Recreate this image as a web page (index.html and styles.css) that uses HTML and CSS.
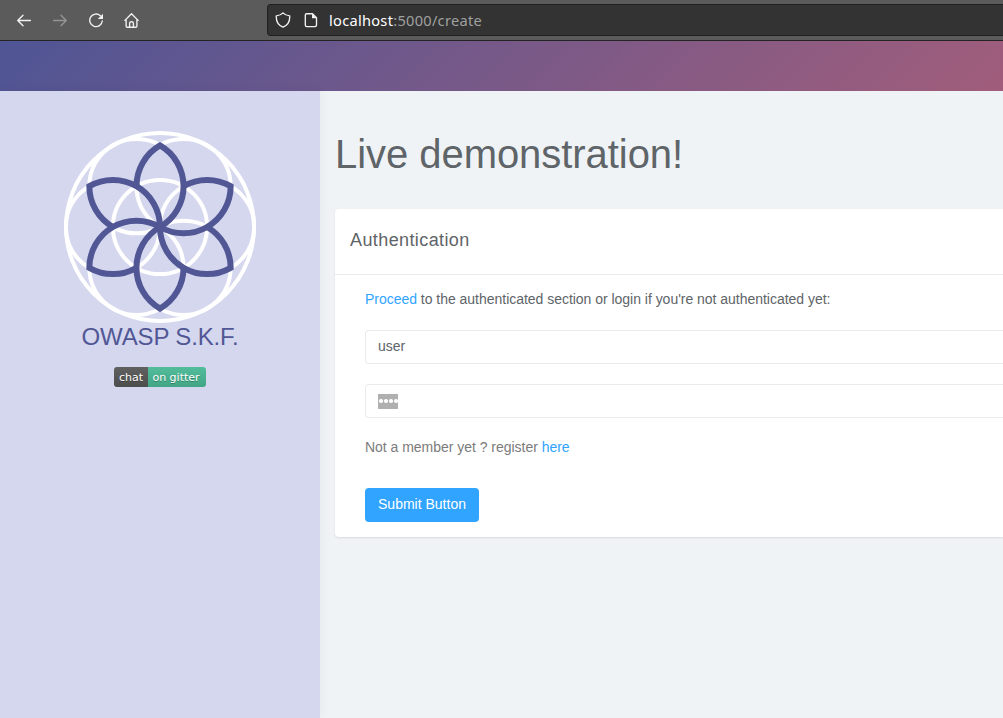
FILE: index.html
```html
<!DOCTYPE html>
<html lang="en">
<head>
<meta charset="utf-8">
<title>OWASP S.K.F.</title>
<link rel="stylesheet" href="styles.css">
</head>
<body>
<div class="toolbar">
  <svg class="nav-icon" viewBox="0 0 16 16"><path d="M14.400 8.500H2M7 3.200 1.700 8.500 7 13.800"/></svg>
  <svg class="nav-icon nav-icon-off" viewBox="0 0 16 16"><path d="M1.600 8.500H14M9 3.200l5.300 5.300L9 13.800"/></svg>
  <svg class="nav-icon" viewBox="0 0 16 16"><path d="M12.300 3.700A6.300 6.300 0 1 0 14.300 9"/><path class="solid" d="M15 1.800v5.200H9.800z"/></svg>
  <svg class="nav-icon" viewBox="0 0 16 16"><path d="M.9 8.400 7.500 1.700l6.600 6.700M2.100 7.400v6.600q0 1.200 1.200 1.200h8.400q1.200 0 1.200-1.200V7.400M5.600 15v-3.700q0-1.600 1.900-1.600t1.900 1.600V15"/></svg>
  <div class="urlbar">
    <svg class="url-icon" viewBox="0 0 16 16"><path d="M8 .9C6.400 2.600 3.800 3.700 1.300 3.900 1 8.500 3 13.200 8 15.200c5-2 7-6.700 6.700-11.300C12.200 3.700 9.600 2.600 8 .9z"/></svg>
    <svg class="url-icon" viewBox="0 0 16 16"><path d="M3.600 1.700h5.900l4 4v7.400q0 1.500-1.500 1.500H3.700q-1.400 0-1.400-1.500V3.100q0-1.400 1.300-1.400z"/><path class="solid" d="M9 1.500v4.800h4.800z"/></svg>
    <div class="url"><span class="url-host">localhost</span>:5000/create</div>
  </div>
</div>
<div class="banner"></div>
<div class="page">
  <aside class="sidebar">
    <svg class="logo" viewBox="-96 -96 192 192">
      <g class="rings">
        <circle r="94"/>
        <circle r="47.100"/>
        <circle cx="47.100" r="47.100"/>
        <circle cx="-47.100" r="47.100"/>
        <circle cx="23.550" cy="-40.800" r="47.100"/>
        <circle cx="-23.550" cy="-40.800" r="47.100"/>
        <circle cx="23.550" cy="40.800" r="47.100"/>
        <circle cx="-23.550" cy="40.800" r="47.100"/>
      </g>
      <g class="petals">
        <path d="M-23.550-40.800A47.100 47.100 0 0 1 0-81.600A47.100 47.100 0 0 1 0 0"/>
        <path transform="rotate(60)" d="M-23.550-40.800A47.100 47.100 0 0 1 0-81.600A47.100 47.100 0 0 1 0 0"/>
        <path transform="rotate(120)" d="M-23.550-40.800A47.100 47.100 0 0 1 0-81.600A47.100 47.100 0 0 1 0 0"/>
        <path transform="rotate(180)" d="M-23.550-40.800A47.100 47.100 0 0 1 0-81.600A47.100 47.100 0 0 1 0 0"/>
        <path transform="rotate(240)" d="M-23.550-40.800A47.100 47.100 0 0 1 0-81.600A47.100 47.100 0 0 1 0 0"/>
        <path transform="rotate(300)" d="M-23.550-40.800A47.100 47.100 0 0 1 0-81.600A47.100 47.100 0 0 1 0 0"/>
      </g>
    </svg>
    <div class="brand">OWASP S.K.F.</div>
    <div class="badge"><span class="badge-left">chat</span><span class="badge-right">on gitter</span></div>
  </aside>
  <main class="main">
    <h1 class="title">Live demonstration!</h1>
    <section class="card">
      <h2 class="card-head">Authentication</h2>
      <form class="card-body">
        <p class="intro"><a class="link">Proceed</a> to the authenticated section or login if you're not authenticated yet:</p>
        <div class="field">user</div>
        <div class="field"><span class="selected"><i class="dot"></i><i class="dot"></i><i class="dot"></i><i class="dot"></i></span></div>
        <p class="hint">Not a member yet ? register <a class="link">here</a></p>
        <button class="submit" type="button">Submit Button</button>
      </form>
    </section>
  </main>
</div>
</body>
</html>
```
FILE: styles.css
```css
* { box-sizing: border-box; }
body {
  margin: 0;
  height: 718px;
  overflow: hidden;
  display: flex;
  flex-direction: column;
  font: 14px/20px "Liberation Sans", Arial, sans-serif;
  color: #5e6468;
  background: #eff3f6;
}
.toolbar {
  flex: none;
  height: 41px;
  display: flex;
  align-items: center;
  gap: 20px;
  padding-left: 16px;
  background: #5b5b5b;
  border-bottom: 1px solid #242424;
}
.nav-icon, .url-icon {
  flex: none;
  width: 16px;
  height: 16px;
  fill: none;
  stroke: #f2f2f2;
  stroke-width: 1.35;
  stroke-linecap: round;
  stroke-linejoin: round;
}
.nav-icon-off { stroke: #949494; }
.solid { fill: #f2f2f2; stroke: none; }
.urlbar {
  flex: 1;
  height: 32px;
  margin-left: 107px;
  display: flex;
  align-items: center;
  gap: 12px;
  padding-left: 7px;
  background: #333;
  border: 1px solid #202020;
  border-right: 0;
  border-radius: 4px 0 0 4px;
}
.url {
  margin-left: -2px;
  padding-bottom: 1px;
  font: 14.600px/20px "Noto Sans", sans-serif;
  letter-spacing: .28px;
  color: #a0a0a0;
}
.url-host { color: #fff; }
.banner {
  flex: none;
  height: 50px;
  background: linear-gradient(135deg, #4f5595 0, #a15d7b 100%);
}
.page { flex: 1; display: flex; }
.sidebar {
  flex: none;
  width: 320px;
  display: flex;
  flex-direction: column;
  align-items: center;
  padding-top: 40px;
  background: #d5d7ee;
  box-shadow: 0 0 12px rgba(0, 0, 0, .05);
}
.logo { width: 192px; height: 192px; }
.rings { fill: none; stroke: #fff; stroke-width: 4; }
.petals { fill: none; stroke: #515795; stroke-width: 6; }
.brand {
  font-size: 24px;
  line-height: 28px;
  letter-spacing: -.15px;
  color: #515795;
}
.badge {
  display: flex;
  height: 20px;
  margin-top: 16px;
  border-radius: 3px;
  overflow: hidden;
  font: 11px/21px "DejaVu Sans", sans-serif;
  color: #fff;
  text-shadow: 0 1px rgba(1, 1, 1, .3);
}
.badge-left, .badge-right { text-align: center; }
.badge-left { width: 34px; background: linear-gradient(#606060, #4d4d4d); }
.badge-right { width: 58px; padding-right: 2px; background: linear-gradient(#52bd9b, #42a586); }
.main { flex: 1; min-width: 0; padding: 39px 0 0 15px; }
.title {
  margin: 0 0 31px;
  font-size: 40px;
  line-height: 48px;
  font-weight: 400;
  letter-spacing: -.05px;
}
.card {
  height: 328px;
  background: #fff;
  border-radius: 4px 0 0 4px;
  box-shadow: 0 1px 2px rgba(0, 0, 0, .1);
}
.card-head {
  margin: 0;
  height: 66px;
  padding: 21px 15px 0;
  border-bottom: 1px solid #e9ebed;
  font-size: 18px;
  line-height: 20px;
  font-weight: 400;
  letter-spacing: .4px;
}
.card-body { padding: 14px 0 0 30px; letter-spacing: -.025px; }
.intro { margin: 0 0 21px; }
.link { color: #2fa4ff; }
.field {
  height: 34px;
  margin-bottom: 20px;
  padding: 5px 12px;
  border: 1px solid #e8eaec;
  border-right: 0;
  border-radius: 4px 0 0 4px;
  line-height: 20px;
}
.selected {
  display: flex;
  width: 20px;
  height: 15px;
  margin-top: 4px;
  padding: 5px 1px 0;
  gap: 1.500px;
  background: #b0b0b0;
}
.dot { flex: none; width: 3.500px; height: 3.500px; border-radius: 50%; background: #fff; }
.hint { margin: -1px 0 31px; color: #7b7b7b; }
.field + .hint { margin-top: 19px; }
.field:nth-of-type(2) { margin-bottom: 19px; }
.submit {
  display: block;
  width: 114px;
  height: 34px;
  padding: 0 0 2px;
  border: 0;
  border-radius: 4px;
  background: #30a4ff;
  color: #fff;
  font: inherit;
}
```
